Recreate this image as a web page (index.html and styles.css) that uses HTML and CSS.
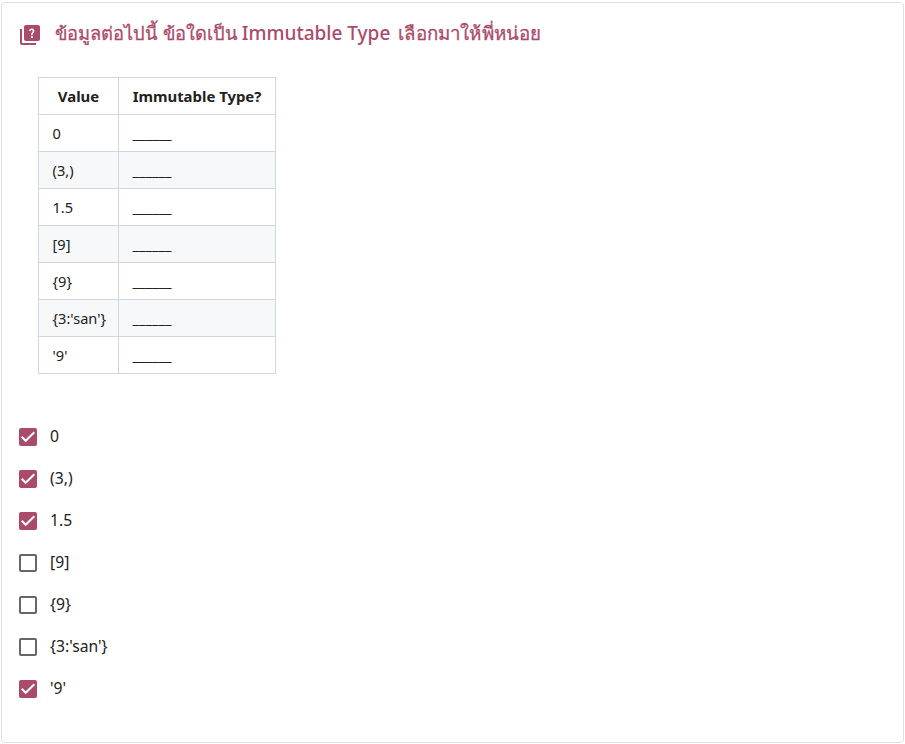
FILE: index.html
```html
<!DOCTYPE html>
<html lang="th">
<head>
<meta charset="utf-8">
<title>Immutable Type</title>
<link rel="stylesheet" href="styles.css">
</head>
<body>
<main class="card">
  <header class="question">
    <svg class="question-icon" viewBox="0 0 24 24"><path fill-rule="evenodd" d="M4 6H2v14c0 1.100.9 2 2 2h14v-2H4V6zM20 2H8c-1.100 0-2 .9-2 2v12c0 1.100.9 2 2 2h12c1.100 0 2-.9 2-2V4c0-1.100-.9-2-2-2zM14 15.200a1.050 1.050 0 1 1 0-2.100 1.050 1.050 0 0 1 0 2.100zM15.700 9.700c-.65.900-1.200 1.200-1.200 2.500h-1.500c0-1.900.8-2.300 1.400-3.100.7-.9.300-2.100-.7-2.100-.8 0-1.200.5-1.400 1.200L10.900 7.600c.4-1.200 1.400-2.200 2.900-2.200 2.300 0 3.300 2.300 1.900 4.300z"/></svg>
    <h1 class="title"><span class="thai">ข้อมูลต่อไปนี้ ข้อใดเป็น</span> <span class="latin">Immutable Type</span> <span class="thai-end">เลือกมาให้พี่หน่อย</span></h1>
  </header>
  <table class="values">
    <thead><tr><th class="col-value">Value</th><th>Immutable Type?</th></tr></thead>
    <tbody>
      <tr><td>0</td><td>______</td></tr>
      <tr><td>(3,)</td><td>______</td></tr>
      <tr><td>1.5</td><td>______</td></tr>
      <tr><td>[9]</td><td>______</td></tr>
      <tr><td>{9}</td><td>______</td></tr>
      <tr><td>{3:'san'}</td><td>______</td></tr>
      <tr><td>'9'</td><td>______</td></tr>
    </tbody>
  </table>
  <div class="options">
    <label class="option"><input type="checkbox" checked><svg class="box" viewBox="0 0 18 18"><path d="M2.700 8.800 6.700 12.800 15.300 4.200"/></svg><span>0</span></label>
    <label class="option"><input type="checkbox" checked><svg class="box" viewBox="0 0 18 18"><path d="M2.700 8.800 6.700 12.800 15.300 4.200"/></svg><span>(3,)</span></label>
    <label class="option"><input type="checkbox" checked><svg class="box" viewBox="0 0 18 18"><path d="M2.700 8.800 6.700 12.800 15.300 4.200"/></svg><span>1.5</span></label>
    <label class="option"><input type="checkbox"><svg class="box" viewBox="0 0 18 18"><path d="M2.700 8.800 6.700 12.800 15.300 4.200"/></svg><span>[9]</span></label>
    <label class="option"><input type="checkbox"><svg class="box" viewBox="0 0 18 18"><path d="M2.700 8.800 6.700 12.800 15.300 4.200"/></svg><span>{9}</span></label>
    <label class="option"><input type="checkbox"><svg class="box" viewBox="0 0 18 18"><path d="M2.700 8.800 6.700 12.800 15.300 4.200"/></svg><span>{3:'san'}</span></label>
    <label class="option"><input type="checkbox" checked><svg class="box" viewBox="0 0 18 18"><path d="M2.700 8.800 6.700 12.800 15.300 4.200"/></svg><span>'9'</span></label>
  </div>
</main>
</body>
</html>
```
FILE: styles.css
```css
* { box-sizing: border-box; }
body {
  margin: 0;
  padding: 2px 1px 1px;
  height: 744px;
  background: #fff;
  color: #212121;
  font-family: "Noto Sans", sans-serif;
}
.card {
  height: 741px;
  padding: 15px 17px;
  border: 1px solid #e0e0e0;
  border-radius: 4px;
}
.question {
  display: flex;
  align-items: center;
  gap: 13px;
  height: 32px;
  color: #ab4a6b;
}
.question-icon {
  width: 24px;
  height: 24px;
  margin: 2px 0 0 -1px;
  fill: currentColor;
}
.title {
  display: flex;
  gap: 6px;
  margin: -2px 0 0;
  font-size: 19px;
  font-weight: 500;
  line-height: 32px;
  white-space: nowrap;
}
.thai, .thai-end { -webkit-text-stroke: 0.300px currentColor; }
.thai { font-size: 18.300px; word-spacing: 1px; }
.thai-end { margin-left: 2px; font-size: 18.700px; letter-spacing: 0.150px; }
.latin { margin-left: -1px; font-size: 19px; }
.values {
  width: 238px;
  height: 297px;
  margin: 27px 0 0 19px;
  border-collapse: collapse;
  table-layout: fixed;
  font-size: 14.900px;
  line-height: 24px;
}
.col-value { width: 80px; }
.values th, .values td {
  height: 37px;
  padding: 6px 13px 6px 13.500px;
  border: 1px solid #d0d7de;
  text-align: left;
  white-space: nowrap;
}
.values td { font-size: 14.600px; }
.values th { padding: 6px 0; text-align: center; font-weight: 700; }
.values tbody tr:nth-child(even) { background: #f6f8fa; }
.options {
  display: flex;
  flex-direction: column;
  margin-top: 42px;
}
.option {
  display: flex;
  align-items: center;
  gap: 13px;
  height: 42px;
  font-size: 15.700px;
  line-height: 20px;
}
.option span { margin-top: -3px; }
.option input {
  appearance: none;
  width: 0;
  height: 0;
  margin: 0 -13px 0 0;
}
.box {
  width: 18px;
  height: 18px;
  border: 2px solid #666;
  border-radius: 2px;
  fill: none;
}
.option input:checked + .box {
  border: 0;
  background: #ab4a6b;
  stroke: #fff;
  stroke-width: 2;
}
```
